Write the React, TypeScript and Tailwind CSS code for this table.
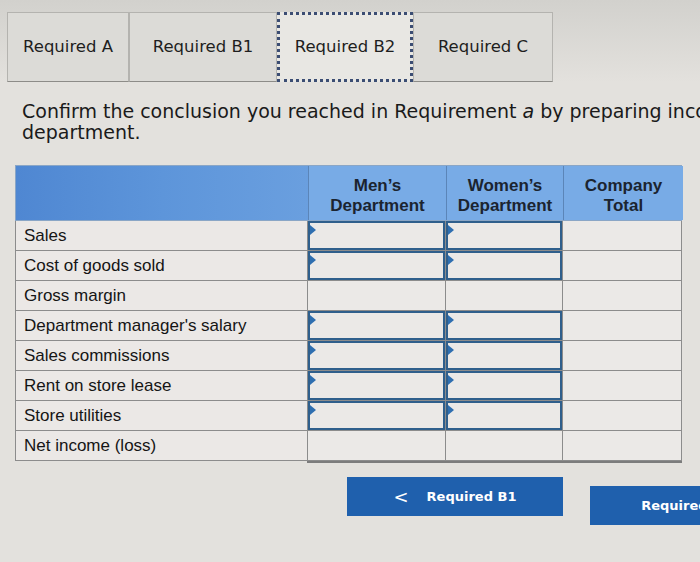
import React from 'react';

const tabs = [
  { label: 'Required A', w: 'w-[122px]', active: false },
  { label: 'Required B1', w: 'w-[148px]', active: false },
  { label: 'Required B2', w: 'w-[136px]', active: true },
  { label: 'Required C', w: 'w-[140px]', active: false },
];

const rows: { label: string; input: boolean }[] = [
  { label: 'Sales', input: true },
  { label: 'Cost of goods sold', input: true },
  { label: 'Gross margin', input: false },
  { label: "Department manager's salary", input: true },
  { label: 'Sales commissions', input: true },
  { label: 'Rent on store lease', input: true },
  { label: 'Store utilities', input: true },
  { label: 'Net income (loss)', input: false },
];

function InputCell() {
  return (
    <div className="relative h-full border-2 border-[#2f5f8c] bg-[#ebe9e7]">
      <span className="absolute left-0 top-[2px] w-0 h-0 border-y-[5px] border-y-transparent border-l-[6px] border-l-[#2f6fb0]" />
    </div>
  );
}

export default function App() {
  return (
    <div className="w-[700px] h-[562px] overflow-hidden bg-[#e3e1dd] font-['DejaVu_Sans',sans-serif] text-[#1e1e1e]">
      {/* tabs */}
      <div className="flex pt-[12px] pl-[7px] bg-gradient-to-b from-[#d2d1cd] to-[#e3e1dd]">
        {tabs.map((t) => (
          <div
            key={t.label}
            className={`${t.w} h-[70px] flex items-center justify-center text-[16.5px] ${
              t.active
                ? 'border-[3px] border-dotted border-[#3b4d73] bg-[#e8e7e3]'
                : 'border border-[#b4b3af] border-b-[#8d8c88] bg-[#dcdbd7]'
            }`}
          >
            {t.label}
          </div>
        ))}
      </div>

      {/* prompt */}
      <div className="pl-[22px] pt-[19px] text-[19px] leading-[21px] text-[#1a1a1a] whitespace-nowrap">
        Confirm the conclusion you reached in Requirement <i>a</i> by preparing income statements by
        <br />
        department.
      </div>

      {/* table */}
      <div className="ml-[15px] mt-[22px] w-[667px] font-['Liberation_Sans',Arial,sans-serif]">
        <div className="grid grid-cols-[292px_138px_117px_120px] h-[56px] border border-[#8aa6c6]">
          <div className="bg-gradient-to-r from-[#4f87d2] via-[#5d95da] to-[#6a9fdf]" />
          {[
            ['Men’s', 'Department'],
            ['Women’s', 'Department'],
            ['Company', 'Total'],
          ].map(([a, b]) => (
            <div
              key={a}
              className="bg-[#78abe6] border-l border-[#5b85b8] flex flex-col items-center justify-end pb-[4px] text-[17px] leading-[20px] font-bold text-[#1b2430]"
            >
              <span>{a}</span>
              <span>{b}</span>
            </div>
          ))}
        </div>
        {rows.map((r) => (
          <div key={r.label} className="grid grid-cols-[292px_138px_117px_120px] h-[30px]">
            <div className="border-l border-b border-[#8c8c8c] bg-[#ebe8e6] flex items-center pl-[8px] text-[17px] text-[#151515]">
              {r.label}
            </div>
            <div className="border-l border-b border-[#8c8c8c] bg-[#ebe9e7]">{r.input ? <InputCell /> : null}</div>
            <div className="border-l border-b border-[#8c8c8c] bg-[#ebe9e7]">{r.input ? <InputCell /> : null}</div>
            <div className="border-x border-b border-[#8c8c8c] bg-[#ebe9e7]" />
          </div>
        ))}
        <div className="ml-[292px] h-[2px] bg-[#7c7c7c]" />
      </div>

      {/* nav buttons */}
      <div className="flex mt-[14px] ml-[347px] gap-[27px] font-['DejaVu_Sans',sans-serif]">
        <button className="w-[216px] h-[39px] bg-[#1f60ad] text-white text-[13px] font-bold flex items-center justify-center gap-[18px] shrink-0">
          <span className="text-[18px] font-normal">&lt;</span>
          <span>Required B1</span>
        </button>
        <button className="w-[216px] h-[39px] mt-[9px] bg-[#1f60ad] text-white text-[13px] font-bold flex items-center justify-center gap-[18px] shrink-0">
          <span>Required C</span>
          <span className="text-[18px] font-normal">&gt;</span>
        </button>
      </div>
    </div>
  );
}
